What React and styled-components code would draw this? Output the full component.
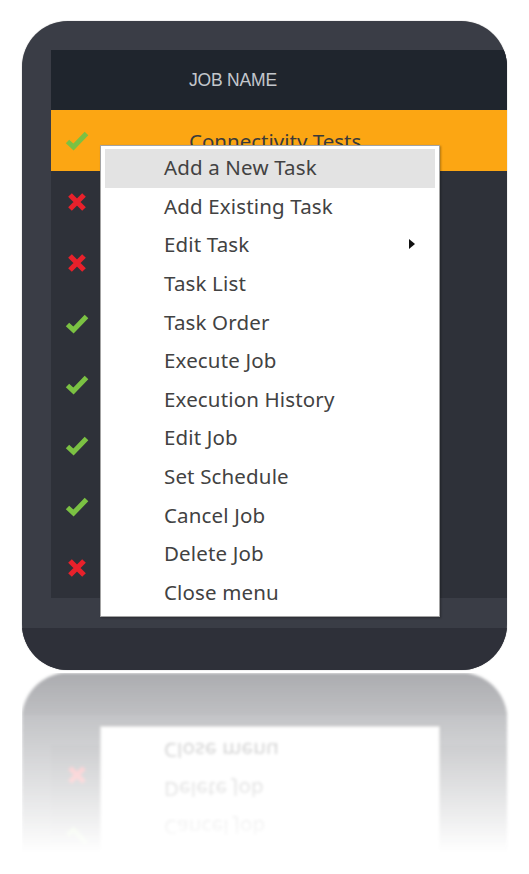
import React from 'react';
import styled, { createGlobalStyle } from 'styled-components';

const GlobalStyle = createGlobalStyle`
    html, body {
        margin: 0;
        padding: 0;
        background: #ffffff;
    }
    body {
        font-family: "Noto Sans", "Open Sans", sans-serif;
    }
`;

const Page = styled.div`
    width: 529px;
    height: 874px;
    padding: 21px 0 0 22px;
    box-sizing: border-box;
    overflow: hidden;
`;

const DeviceFrame = styled.div`
    position: relative;
    width: 485px;
    height: 649px;
    border-radius: 46px;
    background: #3a3d46;
    overflow: hidden;
    display: flex;
    flex-direction: column;
    box-shadow: 0 0 1px rgba(0, 0, 0, 0.5);
`;

const Body = styled.div`
    display: flex;
    flex-direction: column;
    padding: 29px 0 0 29px;
`;

const Panel = styled.div`
    display: flex;
    flex-direction: column;
    background: #2e3139;
`;

const HeaderRow = styled.div`
    height: 60px;
    background: #1f252d;
    display: flex;
    align-items: center;
    padding-left: 138px;
    font-family: "Liberation Sans", Arial, sans-serif;
    font-size: 17.5px;
    color: #c3c7cc;
    letter-spacing: -0.2px;
`;

const JobRow = styled.div`
    height: 61px;
    display: grid;
    grid-template-columns: 52px 1fr;
    align-items: center;
    background: ${p => (p.$selected ? '#fca613' : 'transparent')};
`;

const StatusCell = styled.div`
    display: flex;
    justify-content: center;
    align-items: center;
`;

const NameCell = styled.div`
    padding-left: 86px;
    font-size: 20.5px;
    color: #3a3a3a;
`;

const Ledge = styled.div`
    height: 30px;
`;

const Base = styled.div`
    flex: 1;
    background: #2e3039;
`;

const Menu = styled.div`
    position: absolute;
    left: 78px;
    top: 124px;
    width: 340px;
    box-sizing: border-box;
    padding: 3px 4px 4px;
    background: #ffffff;
    border: 1px solid #a3a3a3;
    box-shadow: 1px 1px 2px rgba(0, 0, 0, 0.3);
    display: flex;
    flex-direction: column;
`;

const MenuItem = styled.div`
    box-sizing: border-box;
    height: 38.6px;
    display: flex;
    align-items: center;
    justify-content: space-between;
    padding: 0 20px 2px 59px;
    font-size: 20.5px;
    letter-spacing: 0.15px;
    color: #424242;
    background: ${p => (p.$active ? '#e3e3e3' : 'transparent')};
`;

const Arrow = styled.span`
    width: 0;
    height: 0;
    border-top: 5px solid transparent;
    border-bottom: 5px solid transparent;
    border-left: 6px solid #111;
`;

const Reflection = styled.div`
    margin-top: 3px;
    height: 180px;
    overflow: hidden;
    filter: blur(1.5px);
    -webkit-mask-image: linear-gradient(rgba(0, 0, 0, 0.4), rgba(0, 0, 0, 0.12) 70%, transparent 100%);
    mask-image: linear-gradient(rgba(0, 0, 0, 0.4), rgba(0, 0, 0, 0.12) 70%, transparent 100%);
`;

const Flipped = styled.div`
    transform: scaleY(-1);
`;

const Check = () => (
    <svg width="24" height="20" viewBox="0 0 24 20">
        <polyline points="2.5,10.5 8.5,16 21.5,2.5" fill="none" stroke="#7bc143" strokeWidth="5" />
    </svg>
);

const Cross = () => (
    <svg width="20" height="20" viewBox="0 0 20 20">
        <path d="M3 3 L17 17 M17 3 L3 17" stroke="#e8212b" strokeWidth="5.2" />
    </svg>
);

const jobs = [
    { ok: true, name: 'Connectivity Tests', selected: true },
    { ok: false },
    { ok: false },
    { ok: true },
    { ok: true },
    { ok: true },
    { ok: true },
    { ok: false },
];

const menuItems = [
    'Add a New Task',
    'Add Existing Task',
    'Edit Task',
    'Task List',
    'Task Order',
    'Execute Job',
    'Execution History',
    'Edit Job',
    'Set Schedule',
    'Cancel Job',
    'Delete Job',
    'Close menu',
];

const Device = () => (
    <DeviceFrame>
        <Body>
            <Panel>
                <HeaderRow>JOB NAME</HeaderRow>
                {jobs.map((job, i) => (
                    <JobRow key={i} $selected={job.selected}>
                        <StatusCell>{job.ok ? <Check /> : <Cross />}</StatusCell>
                        <NameCell>{job.name}</NameCell>
                    </JobRow>
                ))}
            </Panel>
        </Body>
        <Ledge />
        <Base />
        <Menu>
            {menuItems.map((item, i) => (
                <MenuItem key={item} $active={i === 0}>
                    <span>{item}</span>
                    {item === 'Edit Task' && <Arrow />}
                </MenuItem>
            ))}
        </Menu>
    </DeviceFrame>
);

const App = () => (
    <>
        <GlobalStyle />
        <Page>
            <Device />
            <Reflection aria-hidden="true">
                <Flipped>
                    <Device />
                </Flipped>
            </Reflection>
        </Page>
    </>
);

export default App;
